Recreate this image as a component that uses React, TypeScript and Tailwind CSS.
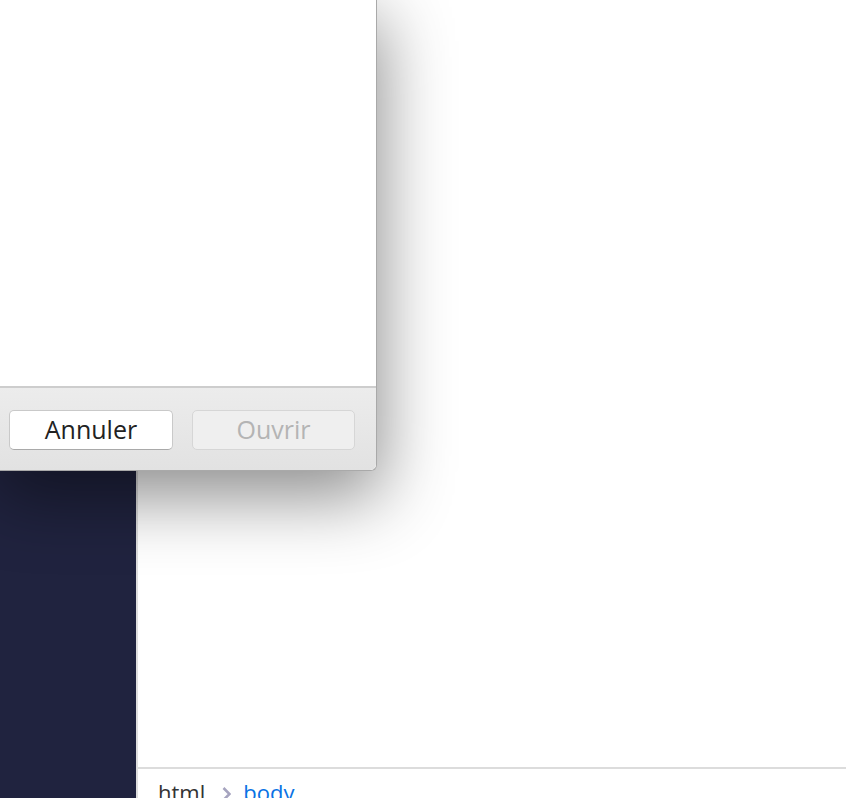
import React from "react";

export default function App() {
  return (
    <div className="relative w-[846px] h-[798px] overflow-hidden bg-white" style={{ fontFamily: '"Open Sans", "Liberation Sans", sans-serif' }}>
      <div className="flex h-full w-full">
        <div className="w-[136px] h-full bg-[#20233f] shrink-0" />
        <div className="w-[2px] h-full bg-[#dedede] shrink-0" />
        <div className="flex-1 flex flex-col">
          <div className="h-[767px] shrink-0 bg-white" />
          <div className="border-t-2 border-[#dcdcdc] flex-1 flex items-start pl-[20px] pt-[8px] text-[22px] leading-[30px]">
            <span className="text-[#333333]">html</span>
            <svg width="9" height="14" viewBox="0 0 9 14" className="mt-[10px] ml-[17px] mr-[12px]">
              <path d="M1.5 1 L7.5 7 L1.5 13" fill="none" stroke="#a6a4bf" strokeWidth="2.6" />
            </svg>
            <span className="text-[#0a72e4]">body</span>
          </div>
        </div>
      </div>

      <div className="absolute left-0 top-0 w-[377px] h-[471px] flex flex-col rounded-br-[6px] bg-white border-r border-b border-[#a9a9a9] shadow-[0_22px_70px_4px_rgba(0,0,0,0.45)]">
        <div className="h-[386px] bg-white shrink-0" />
        <div className="flex-1 border-t-[2px] border-[#cdcdcd] bg-gradient-to-b from-[#ececec] to-[#e2e2e2] rounded-br-[6px] flex items-start pt-[22px] pl-[9px] gap-[19px]">
          <div className="w-[164px] h-[40px] rounded-[5px] bg-white border border-[#c9c9c9] border-b-[#a9a9a9] flex items-center justify-center text-[25px] text-[#222222]">
            Annuler
          </div>
          <div className="w-[163px] h-[40px] rounded-[5px] bg-[#efefef] border border-[#d6d6d6] flex items-center justify-center text-[25px] text-[#b4b4b4]">
            Ouvrir
          </div>
        </div>
      </div>
    </div>
  );
}
